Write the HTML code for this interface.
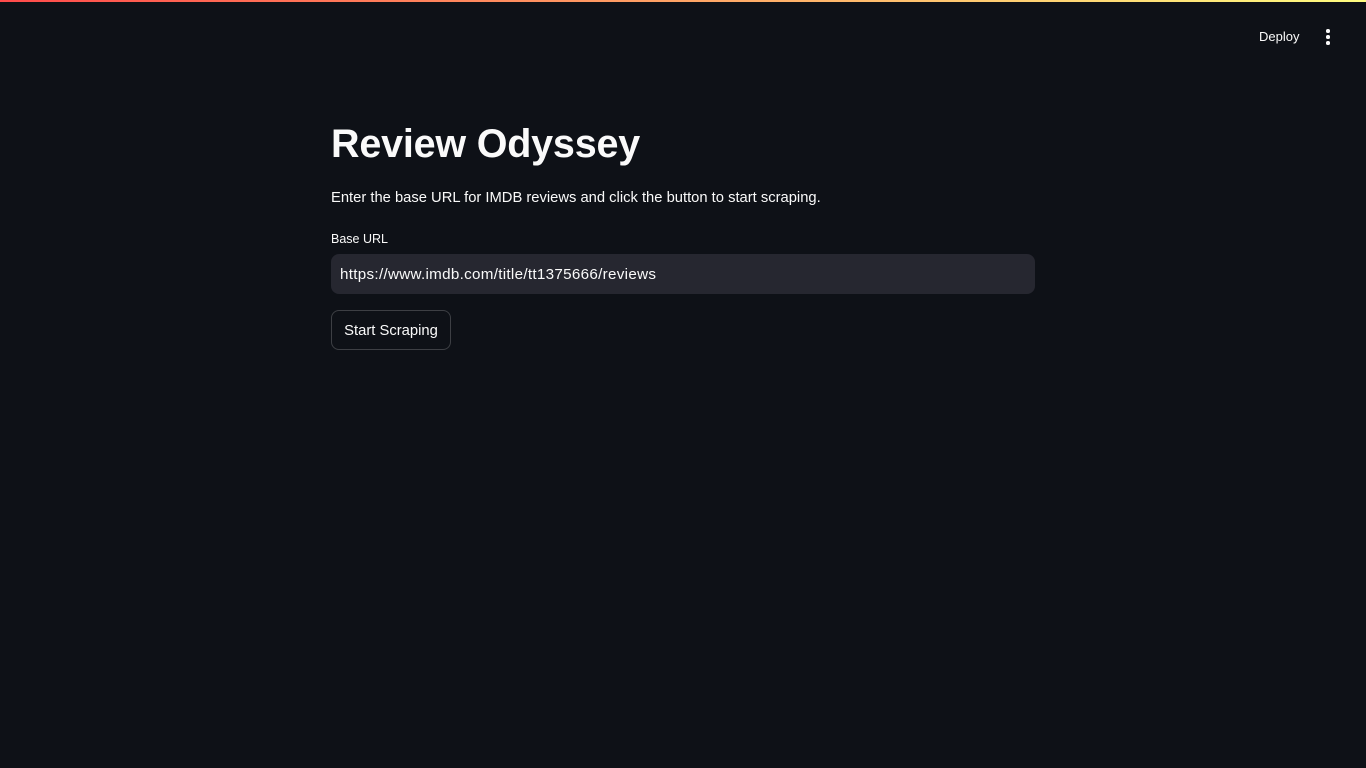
<!DOCTYPE html>
<html><head><meta charset="utf-8"><style>
html,body{margin:0;padding:0;width:1366px;height:768px;background:#0e1117;overflow:hidden;font-family:"Liberation Sans",sans-serif;color:#fafafa}
.bar{position:absolute;left:0;top:0;width:1366px;height:2px;background:linear-gradient(90deg,#ff4b4b,#fffd80)}
.deploy{position:absolute;left:1259px;top:29px;font-size:13px;color:#fafafa}
.menu{position:absolute;left:1326px;top:29px}
.menu i{display:block;width:3.5px;height:3.5px;border-radius:50%;background:#fafafa;margin-bottom:2.5px}
h1{position:absolute;left:331px;top:122px;margin:0;font-size:39.5px;font-weight:bold;letter-spacing:-0.2px}
p{position:absolute;left:331px;top:190px;margin:0;font-size:14.75px}
.lbl{position:absolute;left:331px;top:232px;font-size:12.5px}
.inp{position:absolute;left:331px;top:254px;width:704px;height:40px;background:#262730;border-radius:8px;box-sizing:border-box;padding-left:9px;line-height:41px;font-size:15.2px;letter-spacing:0.3px}
.btn{position:absolute;left:331px;top:310px;width:120px;height:40px;box-sizing:border-box;border:1px solid rgba(250,250,250,0.2);border-radius:8px;text-align:center;line-height:40px;font-size:14.8px}
</style></head><body>
<div class="bar"></div>
<div class="deploy">Deploy</div>
<div class="menu"><i></i><i></i><i></i></div>
<h1>Review Odyssey</h1>
<p>Enter the base URL for IMDB reviews and click the button to start scraping.</p>
<div class="lbl">Base URL</div>
<div class="inp">https://www.imdb.com/title/tt1375666/reviews</div>
<div class="btn">Start Scraping</div>
</body></html>
